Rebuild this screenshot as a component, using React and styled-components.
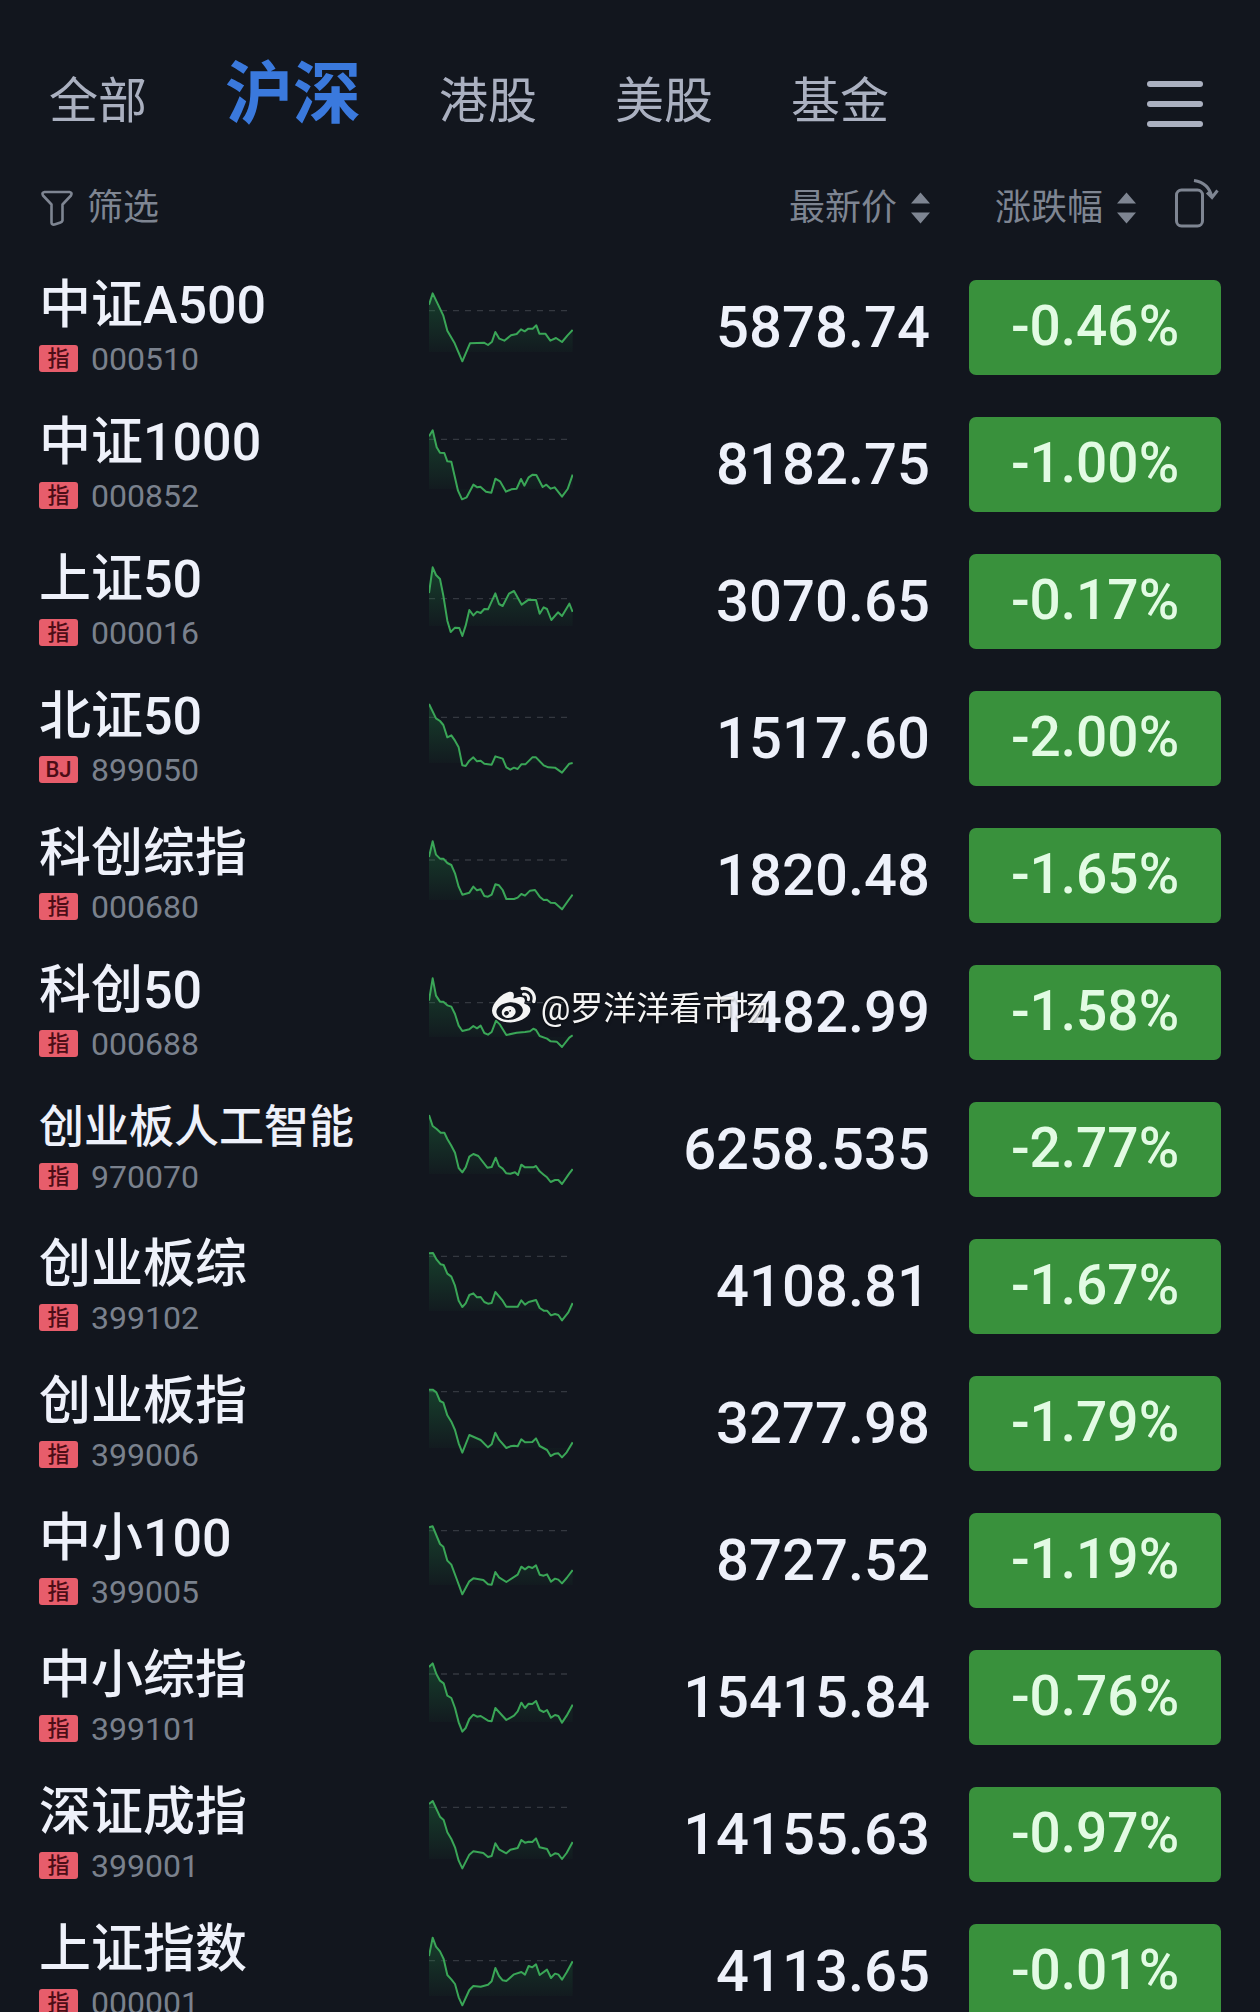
import React, {useId, useState} from "react"
import styled, {createGlobalStyle} from "styled-components"
import {FaWeibo} from "react-icons/fa"

const tabs = ["全部", "沪深", "港股", "美股", "基金"]

// trend points live on a 432 x 216 grid, base is the previous close
const stocks = [
	{name: "中证A500", tag: "指", code: "000510", price: "5878.74", change: "-0.46%", base: 56,
		trend: "0,38 11,4 24,31 43,71 55,116 77,154 100,208 123,154 165,152 177,159 189,149 199,120 211,140 226,146 246,130 263,126 276,112 287,118 298,110 311,110 322,100 331,125 349,125 364,146 381,138 399,150 415,131 431,114"},
	{name: "中证1000", tag: "指", code: "000852", price: "8182.75", change: "-1.00%", base: 31,
		trend: "0,22 11,4 23,55 33,71 46,72 55,97 67,98 87,185 99,211 113,205 133,167 145,175 154,173 171,188 187,191 199,149 213,157 231,188 247,181 263,179 276,150 286,170 299,145 311,137 322,138 341,174 352,167 365,179 377,175 399,203 416,180 431,137"},
	{name: "上证50", tag: "指", code: "000016", price: "3070.65", change: "-0.17%", base: 98,
		trend: "0,81 11,4 21,27 33,39 43,89 55,164 65,198 78,185 91,186 100,210 110,179 121,132 133,148 144,137 155,141 166,129 177,130 199,82 210,114 221,120 240,83 255,75 278,116 299,101 321,102 332,143 344,124 354,129 367,162 387,139 399,150 421,113 431,138"},
	{name: "北证50", tag: "BJ", code: "899050", price: "1517.60", change: "-2.00%", base: 43,
		trend: "0,3 21,46 33,54 43,66 55,103 67,97 78,113 89,133 100,187 110,189 121,173 133,163 144,175 155,173 166,182 188,185 199,160 221,167 232,193 244,200 255,194 266,198 277,184 289,184 310,163 321,163 344,187 358,193 378,194 399,209 421,182 431,180"},
	{name: "科创综指", tag: "指", code: "000680", price: "1820.48", change: "-1.65%", base: 60,
		trend: "0,51 11,4 21,44 33,56 43,56 55,69 67,75 78,100 89,140 100,164 121,158 133,140 144,151 155,148 166,168 177,170 188,164 199,133 210,136 221,150 232,177 255,177 266,173 277,162 288,167 303,152 318,150 332,170 344,180 354,179 365,188 378,189 399,208 421,177 431,164"},
	{name: "科创50", tag: "指", code: "000688", price: "1482.99", change: "-1.58%", base: 77,
		trend: "0,71 11,4 21,56 33,74 43,74 55,85 67,89 78,111 89,146 100,162 121,157 133,147 144,154 155,146 166,168 177,173 188,165 201,131 213,143 232,174 263,167 288,165 303,163 313,155 321,159 332,177 354,185 365,193 383,194 399,210 421,182 431,175"},
	{name: "创业板人工智能", tag: "指", code: "970070", price: "6258.535", change: "-2.77%", compact: true,
		trend: "0,3 11,36 23,45 35,56 46,56 55,75 67,95 78,116 89,162 100,175 110,160 121,128 133,120 148,126 175,161 188,159 200,131 210,156 221,164 232,178 244,179 258,175 267,183 277,152 288,160 313,160 321,156 332,172 344,182 354,190 365,204 378,198 388,198 399,210 421,178 431,165"},
	{name: "创业板综", tag: "指", code: "399102", price: "4108.81", change: "-1.67%", base: 16,
		trend: "0,7 12,6 23,26 35,40 44,42 55,68 67,77 78,104 89,149 100,168 110,157 121,132 133,127 144,139 155,138 166,153 177,158 188,156 199,123 221,149 232,167 266,167 277,148 288,161 299,153 321,147 332,171 344,179 354,179 366,193 378,189 388,192 399,208 418,184 431,156"},
	{name: "创业板指", tag: "指", code: "399006", price: "3277.98", change: "-1.79%", base: 11,
		trend: "0,5 11,5 22,13 33,39 43,44 55,82 67,101 78,126 89,166 100,194 121,141 155,156 177,178 188,169 199,134 210,155 232,180 244,175 255,173 266,175 277,154 288,163 310,162 321,151 332,174 354,186 365,204 378,197 388,196 399,208 413,193 431,163"},
	{name: "中小100", tag: "指", code: "399005", price: "8727.52", change: "-1.19%", base: 17,
		trend: "0,7 11,4 33,57 43,65 55,107 67,119 83,162 100,208 121,169 133,160 163,165 177,178 188,179 199,141 210,157 232,171 266,149 277,125 288,133 299,125 310,129 321,121 332,149 344,152 354,148 366,170 378,161 388,164 399,175 413,159 431,135"},
	{name: "中小综指", tag: "指", code: "399101", price: "15415.84", change: "-0.76%", base: 36,
		trend: "0,15 11,4 22,36 33,56 44,64 55,101 67,108 78,138 89,181 100,209 110,198 121,171 133,158 144,164 155,162 177,176 188,178 199,138 232,174 255,161 266,148 277,122 288,138 299,125 310,126 321,117 332,144 344,150 354,144 366,167 378,159 388,162 399,182 413,161 431,128"},
	{name: "深证成指", tag: "指", code: "399001", price: "14155.63", change: "-0.97%", base: 25,
		trend: "0,15 11,6 33,53 44,63 55,100 67,120 78,145 89,185 100,208 121,167 133,157 163,162 177,174 188,171 199,133 210,151 232,163 244,152 266,147 277,123 288,131 299,128 310,129 321,118 332,145 354,150 365,171 378,163 388,165 399,180 413,162 431,129"},
	{name: "上证指数", tag: "指", code: "000001", price: "4113.65", change: "-0.01%", base: 74,
		trend: "0,60 11,5 21,32 33,46 44,69 55,117 67,130 78,144 89,184 100,208 121,162 133,150 155,152 177,146 188,136 199,96 210,120 221,133 232,135 255,115 277,108 288,116 299,90 310,94 321,85 332,117 354,101 366,126 378,113 388,116 399,131 413,109 431,76"},
]

const Trend = ({points, base}) => {
	const id = useId()
	return (
		<TrendChart viewBox="0 0 432 216" aria-hidden="true">
			<linearGradient id={id} gradientUnits="userSpaceOnUse" x1="0" y1="0" x2="0" y2="190">
				<stop offset="0" stopColor="#1f8a45" stopOpacity="0.36" />
				<stop offset="1" stopColor="#1f8a45" stopOpacity="0.02" />
			</linearGradient>
			{base && <path className="base" d={`M0 ${base}H414`} />}
			<polygon points={`0,180 ${points} 431,180`} fill={`url(#${id})`} />
			<polyline points={points} />
		</TrendChart>
	)
}

const SortIcon = () => (
	<svg width="19" height="32" viewBox="0 0 19 32" aria-hidden="true">
		<path d="M9.5 0.5L19 11.5H0zM9.5 31.5L19 20.5H0z" fill="currentColor" />
	</svg>
)

const App = () => {
	const [activeTab, setActiveTab] = useState("沪深")
	return (
		<Page>
			<GlobalStyle />
			<Header>
				<Tabs>
					{tabs.map((tab) => (
						<Tab key={tab} type="button" $active={tab === activeTab} onClick={() => setActiveTab(tab)}>{tab}</Tab>
					))}
				</Tabs>
				<MenuButton type="button" aria-label="菜单">
					<span />
					<span />
					<span />
				</MenuButton>
			</Header>
			<Quotes>
				<colgroup>
					<col className="name" />
					<col className="trend" />
					<col />
					<col className="change" />
				</colgroup>
				<thead>
					<tr>
						<HeadCell colSpan="2">
							<ToolButton type="button">
								<svg width="32" height="36" viewBox="0 0 32 36" fill="none" stroke="currentColor" strokeWidth="2.6" strokeLinejoin="round" aria-hidden="true">
									<path d="M3.5 2H28.5Q31.5 2.5 30 5.5L21.5 14.5V30.5Q21 32 19.5 32.5L13.5 34.5Q10.5 35 10.5 32.5V14.5L2 5.5Q0.5 2.5 3.5 2Z" />
								</svg>
								筛选
							</ToolButton>
						</HeadCell>
						<HeadCell>
							<Tools>
								<ToolButton type="button">最新价<SortIcon /></ToolButton>
							</Tools>
						</HeadCell>
						<HeadCell>
							<Tools>
								<ToolButton type="button">涨跌幅<SortIcon /></ToolButton>
								<ToolButton type="button" aria-label="横屏">
									<svg width="46" height="58" viewBox="0 0 46 58" fill="none" stroke="currentColor" strokeWidth="3" aria-hidden="true">
										<rect x="1.5" y="11" width="26" height="36" rx="5" />
										<path d="M19 1.5C29 3 35 9 37 18.5M32 13.5L37 18.5L42.5 11.5" />
									</svg>
								</ToolButton>
							</Tools>
						</HeadCell>
					</tr>
				</thead>
				<tbody>
					{stocks.map((stock) => (
						<Row key={stock.code}>
							<NameCell scope="row">
								<Name $compact={stock.compact}>{stock.name}</Name>
								<Code>
									<Tag>{stock.tag}</Tag>
									{stock.code}
								</Code>
							</NameCell>
							<td><Trend points={stock.trend} base={stock.base} /></td>
							<PriceCell>{stock.price}</PriceCell>
							<ChangeCell>
								<Change>{stock.change}</Change>
							</ChangeCell>
						</Row>
					))}
				</tbody>
			</Quotes>
			<Watermark>
				<FaWeibo size={44} />
				@罗洋洋看市场
			</Watermark>
		</Page>
	)
}
export default App

const GlobalStyle = createGlobalStyle`
	body{
		margin:0;
		background:#12161e;
		font-family:Roboto, "Noto Sans CJK SC", sans-serif;
	}
	::-webkit-scrollbar{
		display:none;
	}
	button{
		padding:0;
		border:0;
		background:none;
		font-family:inherit;
		cursor:pointer;
	}
	svg{
		display:block;
		flex:none;
	}
`

const Page = styled.main`
	color:#eef1fa;
`

const Header = styled.header`
	display:flex;
	align-items:flex-end;
	justify-content:space-between;
	padding:58px 57px 25px 49px;
`

const Tabs = styled.nav`
	display:flex;
	align-items:baseline;
	gap:78px;
	height:74px;
`

const Tab = styled.button`
	font-size:${({$active}) => $active ? "68px" : "49px"};
	font-weight:${({$active}) => $active ? 700 : 400};
	line-height:74px;
	color:${({$active}) => $active ? "#3a79dd" : "#aab0c0"};
	white-space:nowrap;
`

const MenuButton = styled.button`
	display:flex;
	flex-direction:column;
	justify-content:center;
	gap:14px;
	width:56px;
	height:56px;
	span{
		height:6px;
		border-radius:3px;
		background:#aab0c0;
	}
`

const Quotes = styled.table`
	width:100%;
	table-layout:fixed;
	border-collapse:collapse;
	td,
	th{
		padding:0;
		font-weight:400;
		text-align:left;
	}
	.name{
		width:429px;
	}
	.trend{
		width:144px;
	}
	.change{
		width:330px;
	}
`

const HeadCell = styled.th`
	height:102px;
	&:first-child{
		padding-left:41px;
	}
	&:last-child{
		padding-right:39px;
	}
`

const Tools = styled.div`
	display:flex;
	align-items:center;
	justify-content:flex-end;
	gap:39px;
`

const ToolButton = styled.button`
	display:flex;
	align-items:center;
	gap:14px;
	font-size:36px;
	line-height:48px;
	color:#7e8592;
	white-space:nowrap;
`

const Row = styled.tr`
	height:137px;
`

const NameCell = styled.th`
	&&{
		padding:0 0 10px 39px;
	}
	white-space:nowrap;
`

const Name = styled.div`
	font-size:${({$compact}) => $compact ? "45px" : "52px"};
	font-weight:500;
	line-height:${({$compact}) => $compact ? "62px" : "70px"};
`

const Code = styled.div`
	display:flex;
	align-items:center;
	gap:13px;
	margin-top:2px;
	font-size:32px;
	line-height:32px;
	color:#7a818d;
`

const Tag = styled.span`
	width:39px;
	border-radius:3px;
	background:#e75d6b;
	font-size:22px;
	font-weight:500;
	line-height:27px;
	text-align:center;
	color:#4c0d16;
`

const TrendChart = styled.svg`
	width:144px;
	height:72px;
	.base{
		stroke:#343840;
		stroke-width:4;
		stroke-dasharray:18 18;
	}
	polyline{
		fill:none;
		stroke:#3aa657;
		stroke-width:6;
		stroke-linejoin:round;
	}
`

const PriceCell = styled.td`
	&&{
		padding-bottom:2px;
		font-size:58px;
		font-weight:500;
		text-align:right;
	}
`

const ChangeCell = styled.td`
	&&{
		padding:0 39px;
	}
`

const Change = styled.div`
	padding-bottom:2px;
	border-radius:7px;
	background:#39913c;
	font-size:55px;
	font-weight:500;
	line-height:93px;
	text-align:center;
	color:#e2fbe3;
`

const Watermark = styled.div`
	position:fixed;
	inset:0;
	display:flex;
	align-items:center;
	justify-content:center;
	gap:5px;
	font-size:33px;
	color:#f4f4f4;
	text-shadow:0 1px 3px #000000aa;
	pointer-events:none;
`
